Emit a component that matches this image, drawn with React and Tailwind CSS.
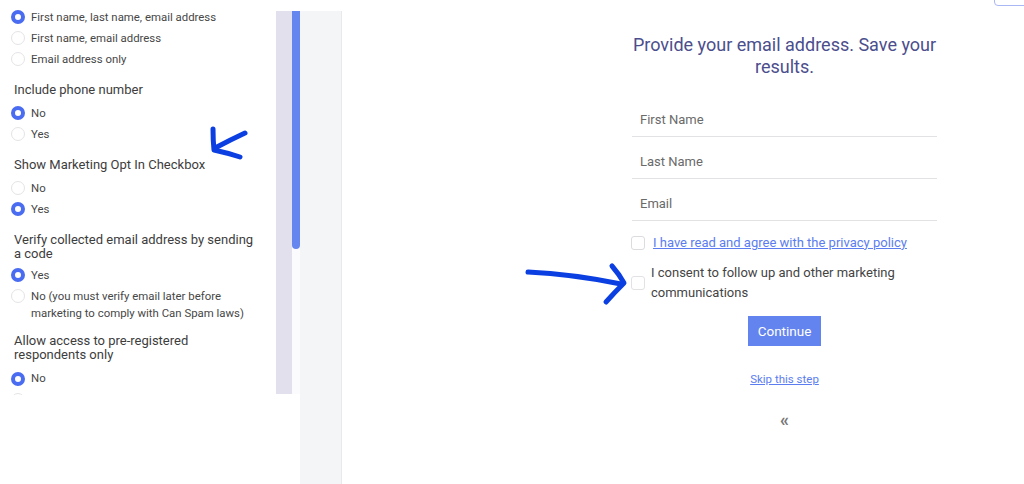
import React from "react";

const font = { fontFamily: "Roboto, 'Noto Sans', Arial, sans-serif" };

function Radio({ checked, children }) {
  return (
    <div className="flex items-start gap-[6px] pl-[11px] pr-[8px]">
      <span
        className={
          "mt-[1.5px] h-[14px] w-[14px] shrink-0 rounded-full bg-white " +
          (checked ? "border-[4px] border-[#4a6cf0]" : "border border-[#e4e4e6]")
        }
      />
      <span className="text-[11.4px] leading-[17px] text-[#474747]">{children}</span>
    </div>
  );
}

function Heading({ children, className = "" }) {
  return (
    <div className={"pl-[14px] pr-[8px] text-[13px] leading-[14px] text-[#3d3d3d] " + className}>
      {children}
    </div>
  );
}

function Group({ children }) {
  return <div className="flex flex-col gap-[4px]">{children}</div>;
}

function Field({ label }) {
  return (
    <div className="flex h-[42px] items-end border-b border-[#e2e2e4] pb-[6px] pl-[8px]">
      <span className="text-[13px] leading-[20px] text-[#6a6a6a]">{label}</span>
    </div>
  );
}

export default function App() {
  return (
    <div className="relative flex h-[484px] w-[1024px] overflow-hidden bg-white" style={font}>
      {/* Left settings panel */}
      <div className="flex h-[395px] w-[300px] shrink-0">
        <div className="h-[395px] w-[276px] overflow-hidden pt-[8.5px]">
          <Group>
            <Radio checked>First name, last name, email address</Radio>
            <Radio>First name, email address</Radio>
            <Radio>Email address only</Radio>
          </Group>
          <Heading className="mt-[15px] mb-[8px]">Include phone number</Heading>
          <Group>
            <Radio checked>No</Radio>
            <Radio>Yes</Radio>
          </Group>
          <Heading className="mt-[15px] mb-[8px]">Show Marketing Opt In Checkbox</Heading>
          <Group>
            <Radio>No</Radio>
            <Radio checked>Yes</Radio>
          </Group>
          <Heading className="mt-[15px] mb-[6px]">
            Verify collected email address by sending
            <br />
            a code
          </Heading>
          <Group>
            <Radio checked>Yes</Radio>
            <Radio>
              No (you must verify email later before
              <br />
              marketing to comply with Can Spam laws)
            </Radio>
          </Group>
          <Heading className="mt-[12.5px] mb-[8px]">
            Allow access to pre-registered
            <br />
            respondents only
          </Heading>
          <Group>
            <Radio checked>No</Radio>
            <Radio>Yes</Radio>
          </Group>
        </div>
        <div className="mt-[11px] h-[383px] w-[16px] bg-[#e1e0ec]" />
        <div className="mt-[11px] flex h-[383px] w-[8px] flex-col bg-[#fbfbfd]">
          <div className="h-[238px] w-[8px] rounded-b-[4px] bg-[#6585ef]" />
        </div>
      </div>

      {/* Gray gutter */}
      <div className="mt-[11px] h-[473px] w-[42px] shrink-0 border-r border-[#e8e9ed] bg-[#f4f5f7]" />

      {/* Main form */}
      <div className="flex-1">
        <div className="ml-[290px] flex w-[305px] flex-col pt-[34px]">
          <h1 className="text-center text-[18px] leading-[22px] text-[#4b4e8d]">
            Provide your email address. Save your results.
          </h1>
          <div className="mt-[17px]">
            <Field label="First Name" />
            <Field label="Last Name" />
            <Field label="Email" />
          </div>
          <div className="mt-[11.5px] flex items-center gap-[8px]">
            <span className="ml-[-1px] h-[14px] w-[14px] shrink-0 rounded-[3px] border border-[#dcdcdf] bg-white" />
            <a className="text-[13px] leading-[20px] text-[#5b7def] underline" href="#">
              I have read and agree with the privacy policy
            </a>
          </div>
          <div className="mt-[10.5px] flex items-center gap-[6px]">
            <span className="ml-[-1px] h-[14px] w-[14px] shrink-0 rounded-[3px] border border-[#e2e2e5] bg-white" />
            <span className="text-[13px] leading-[20px] text-[#444444]">
              I consent to follow up and other marketing
              <br />
              communications
            </span>
          </div>
          <button className="mx-auto mt-[13px] h-[30px] w-[73px] bg-[#6383ee] text-[13.5px] text-white">
            Continue
          </button>
          <a href="#" className="mt-[25px] text-center text-[11.5px] leading-[16px] text-[#5b7def] underline">
            Skip this step
          </a>
          <div className="mt-[23px] text-center text-[18px] font-bold leading-[20px] text-[#777777]">«</div>
        </div>
      </div>

      {/* Top-right cut-off button */}
      <div className="absolute right-[-6px] top-[-12px] h-[18px] w-[36px] rounded-[4px] border border-[#a9b8f5] bg-white" />

      {/* Hand-drawn annotation arrows */}
      <svg className="pointer-events-none absolute left-0 top-0" width="1024" height="484" viewBox="0 0 1024 484">
        <g fill="none" stroke="#0b3fe2" strokeWidth="5" strokeLinecap="round" strokeLinejoin="round">
          <path d="M245 133 Q230 140 215 148" />
          <path d="M213 129 Q213 140 214 150 Q228 153 240 157" />
          <path d="M528 272 Q572 274 621 284" />
          <path d="M612 266 Q619 274 624 283 Q614 293 606 302" />
        </g>
      </svg>
    </div>
  );
}
